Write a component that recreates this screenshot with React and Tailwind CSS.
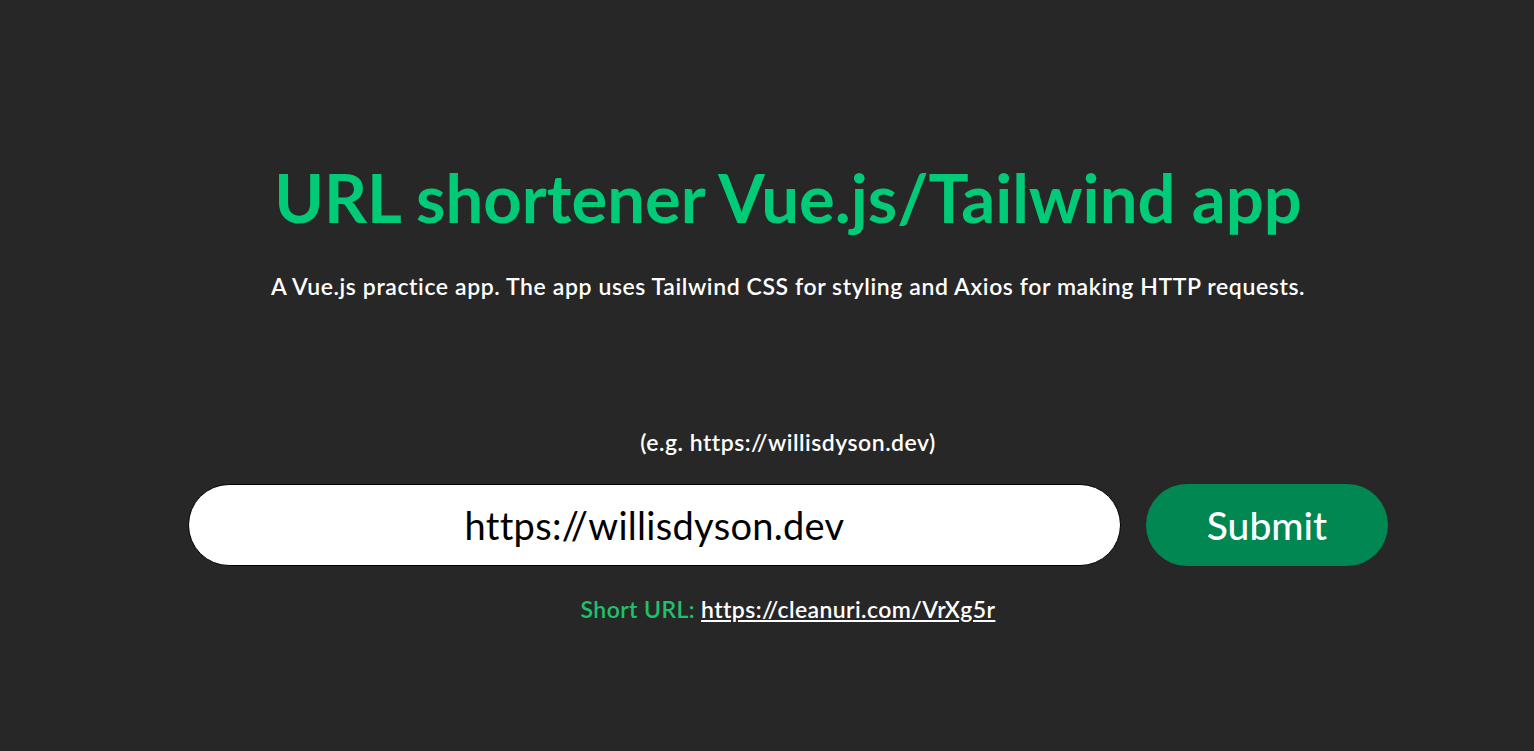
import { useState } from "react";

export default function App() {
  const [url, setUrl] = useState("https://willisdyson.dev");

  return (
    <div className="min-h-screen w-full bg-[#272727] text-white" style={{ fontFamily: "Lato, 'Open Sans', sans-serif" }}>
      <div className="w-[1200px] ml-[188px] flex flex-col items-center">
        <h1 className="mt-[157px] text-[67px] leading-[80px] font-bold text-[#02cb77]">
          URL shortener Vue.js/Tailwind app
        </h1>
        <p className="mt-[34px] text-[23px] leading-[30px] font-semibold tracking-[0.6px]">
          A Vue.js practice app. The app uses Tailwind CSS for styling and Axios for making HTTP requests.
        </p>

        <label className="mt-[126px] text-[23px] leading-[30px] font-semibold tracking-[0.5px]">(e.g. https://willisdyson.dev)</label>

        <form className="mt-[27px] w-full flex gap-[25px]" onSubmit={(e) => e.preventDefault()}>
          <input
            value={url}
            onChange={(e) => setUrl(e.target.value)}
            className="w-[933px] h-[82px] rounded-full bg-white border border-black text-black text-center text-[38px] tracking-[0.3px] outline-none"
          />
          <button className="w-[242px] h-[82px] rounded-full bg-[#008752] text-white text-[39px] font-medium">Submit</button>
        </form>

        <p className="mt-[28px] text-[23px] leading-[30px] font-semibold tracking-[0.4px]">
          <span className="text-[#1ec26a]">Short URL: </span>
          <a href="#" className="underline underline-offset-2">https://cleanuri.com/VrXg5r</a>
        </p>
      </div>
    </div>
  );
}
